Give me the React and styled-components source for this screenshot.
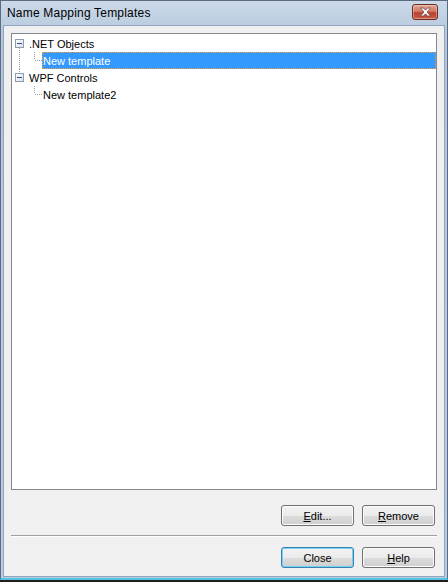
import React from 'react';
import styled, { createGlobalStyle } from 'styled-components';

const GlobalStyle = createGlobalStyle`
  html, body {
    margin: 0;
    padding: 0;
    background: #1e1e1e;
  }
  body {
    font-family: "Liberation Sans", Arial, sans-serif;
    font-size: 11px;
    color: #000;
  }
`;

const Frame = styled.div`
  box-sizing: border-box;
  width: 448px;
  height: 580px;
  display: flex;
  flex-direction: column;
  background: linear-gradient(#cbd9e9, #b3c6dc 40px, #b9cde3);
  border: 1px solid #5b6b80;
  border-bottom: 2px solid #54c3e2;
  padding: 0 2px 1px 2px;
`;

const TitleBar = styled.div`
  height: 24px;
  display: flex;
  align-items: center;
  justify-content: space-between;
  padding: 0 7px 0 4px;
  flex-shrink: 0;
`;

const Title = styled.span`
  font-size: 12px;
  color: #000;
  letter-spacing: 0.2px;
`;

const CloseX = styled.div`
  width: 24px;
  height: 14px;
  margin-top: -2px;
  border: 1px solid #6b2b22;
  border-radius: 3px;
  background: linear-gradient(#e4a592, #d07a66 45%, #b8432f 55%, #c85b45);
  display: flex;
  align-items: center;
  justify-content: center;
  box-shadow: inset 0 0 0 1px rgba(255, 255, 255, 0.35);
`;

const Body = styled.div`
  flex: 1;
  display: flex;
  flex-direction: column;
  background: #f0f0f0;
  border: 1px solid #8fa4bd;
  padding: 7px 7px 8px 7px;
`;

const TreeBox = styled.div`
  height: 453px;
  background: #fff;
  border: 1px solid #828790;
  padding: 1px 0;
  overflow: hidden;
`;

const Row = styled.div`
  display: flex;
  align-items: stretch;
  height: 17px;
`;

const Label = styled.div`
  display: flex;
  align-items: center;
  padding: 0 2px 0 1px;
  white-space: nowrap;
  box-sizing: border-box;
  ${(p) =>
    p.$selected &&
    `
    flex: 1;
    background: #3399ff;
    color: #fff;
    outline: 1px dotted #f2a03c;
    outline-offset: -1px;
  `}
`;

const ButtonRow = styled.div`
  display: flex;
  justify-content: flex-end;
  gap: 8px;
  padding-right: 2px;
  margin-top: ${(p) => p.$top || 0}px;
`;

const Button = styled.button`
  box-sizing: border-box;
  width: 73px;
  height: 21px;
  padding: 0;
  font-family: "Liberation Sans", Arial, sans-serif;
  font-size: 11px;
  color: #000;
  border: 1px solid ${(p) => (p.$default ? '#3c7fb1' : '#707070')};
  border-radius: 3px;
  background: linear-gradient(#f2f2f2, #ebebeb 50%, #dddddd 51%, #cfcfcf);
  box-shadow: inset 0 0 0 1px ${(p) => (p.$default ? '#6fd2f7' : '#fcfcfc')};
`;

const Separator = styled.div`
  height: 0;
  border-top: 1px solid #a0a0a0;
  border-bottom: 1px solid #fff;
  margin: 9px 0 10px 0;
`;

const Key = styled.span`
  text-decoration: underline;
`;

const Expander = ({ lineUp, lineDown }) => (
  <svg width="16" height="17" viewBox="0 0 16 17">
    {lineUp && <line x1="7.5" y1="0" x2="7.5" y2="4" stroke="#a0a0a0" strokeDasharray="1 1" />}
    {lineDown && <line x1="7.5" y1="13" x2="7.5" y2="17" stroke="#a0a0a0" strokeDasharray="1 1" />}
    <defs>
      <linearGradient id="exp" x1="0" y1="0" x2="1" y2="1">
        <stop offset="0" stopColor="#ffffff" />
        <stop offset="1" stopColor="#d8dde6" />
      </linearGradient>
    </defs>
    <rect x="3.5" y="4.5" width="8" height="8" fill="url(#exp)" stroke="#8e9db3" />
    <line x1="5" y1="8.5" x2="10" y2="8.5" stroke="#2d4f8e" />
  </svg>
);

const ChildLines = ({ through }) => (
  <svg width="30" height="17" viewBox="0 0 30 17">
    {through && <line x1="7.5" y1="0" x2="7.5" y2="17" stroke="#a0a0a0" strokeDasharray="1 1" />}
    <line x1="22.5" y1="0" x2="22.5" y2="8" stroke="#a0a0a0" strokeDasharray="1 1" />
    <line x1="23" y1="8.5" x2="30" y2="8.5" stroke="#a0a0a0" strokeDasharray="1 1" />
  </svg>
);

const tree = [
  { name: '.NET Objects', children: [{ name: 'New template', selected: true }] },
  { name: 'WPF Controls', children: [{ name: 'New template2' }] },
];

const App = () => {
  return (
    <>
      <GlobalStyle />
      <Frame>
        <TitleBar>
          <Title>Name Mapping Templates</Title>
          <CloseX>
            <svg width="13" height="10" viewBox="0 0 13 10">
              <path
                d="M1.5 1 L4.5 1 L6.5 3.2 L8.5 1 L11.5 1 L8 5 L11.5 9 L8.5 9 L6.5 6.8 L4.5 9 L1.5 9 L5 5 Z"
                fill="#fff"
                stroke="#6d4a46"
                strokeWidth="0.8"
              />
            </svg>
          </CloseX>
        </TitleBar>
        <Body>
          <TreeBox>
            {tree.map((node, i) => {
              const last = i === tree.length - 1;
              return (
                <React.Fragment key={node.name}>
                  <Row>
                    <Expander lineUp={i > 0} lineDown={!last} />
                    <Label>{node.name}</Label>
                  </Row>
                  {node.children.map((c) => (
                    <Row key={c.name}>
                      <ChildLines through={!last} />
                      <Label $selected={c.selected}>{c.name}</Label>
                    </Row>
                  ))}
                </React.Fragment>
              );
            })}
          </TreeBox>
          <ButtonRow $top={15}>
            <Button>
              <Key>E</Key>dit...
            </Button>
            <Button>
              <Key>R</Key>emove
            </Button>
          </ButtonRow>
          <Separator />
          <ButtonRow>
            <Button $default>Close</Button>
            <Button>
              <Key>H</Key>elp
            </Button>
          </ButtonRow>
        </Body>
      </Frame>
    </>
  );
};

export default App;
